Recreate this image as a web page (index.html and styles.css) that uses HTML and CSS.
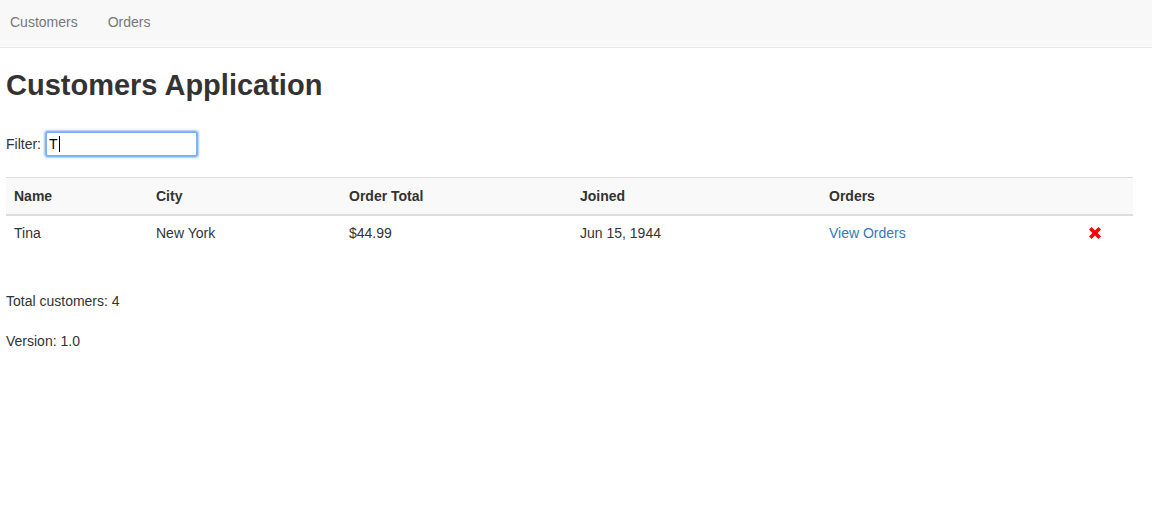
FILE: index.html
```html
<!DOCTYPE html>
<html>
<head>
<meta charset="utf-8">
<link rel="stylesheet" href="styles.css">
</head>
<body>
<nav class="navbar">
  <a class="nav-link" href="#">Customers</a>
  <a class="nav-link" href="#">Orders</a>
</nav>
<main class="container">
  <h1 class="title">Customers Application</h1>
  <div class="filter">
    <label class="filter-label">Filter:</label>
    <div class="filter-input">T<span class="caret"></span></div>
  </div>
  <table class="table">
    <colgroup>
      <col class="c1"><col class="c2"><col class="c3"><col class="c4"><col class="c5"><col class="c6">
    </colgroup>
    <thead>
      <tr><th>Name</th><th>City</th><th>Order Total</th><th>Joined</th><th>Orders</th><th></th></tr>
    </thead>
    <tbody>
      <tr>
        <td>Tina</td><td>New York</td><td>$44.99</td><td>Jun 15, 1944</td>
        <td><a class="link" href="#">View Orders</a></td>
        <td><svg class="remove" width="12" height="12" viewBox="0 0 12 12"><path d="M2.6 0 L6 3.4 L9.4 0 L12 2.6 L8.6 6 L12 9.4 L9.4 12 L6 8.6 L2.6 12 L0 9.4 L3.4 6 L0 2.6 Z" fill="#ff0000"/></svg></td>
      </tr>
    </tbody>
  </table>
  <p class="info total">Total customers: 4</p>
  <p class="info">Version: 1.0</p>
</main>
</body>
</html>
```
FILE: styles.css
```css
* { box-sizing: border-box; }
html, body { margin: 0; padding: 0; background: #fff; }
body {
  font-family: "Liberation Sans", Arial, sans-serif;
  font-size: 14px;
  line-height: 20px;
  color: #333;
}
.navbar {
  height: 48px;
  background: #f8f8f8;
  border-bottom: 1px solid #e7e7e7;
  display: flex;
  align-items: center;
  padding-left: 10px;
  padding-bottom: 3px;
  gap: 30px;
}
.nav-link {
  color: #777;
  text-decoration: none;
  font-size: 14px;
}
.container { padding: 0 6px; }
.title {
  margin: 19px 0 0 0;
  font-size: 29px;
  line-height: 36px;
  font-weight: bold;
  color: #333;
}
.filter {
  margin-top: 28px;
  display: flex;
  align-items: center;
  gap: 4px;
  height: 26px;
}
.filter-label { color: #333; }
.filter-input {
  width: 153px;
  height: 26px;
  border: 2px solid #7db3f5;
  border-radius: 3px;
  box-shadow: 0 0 2px 1px rgba(110, 165, 240, 0.6);
  padding: 1px 2px;
  font-size: 14px;
  line-height: 20px;
  color: #000;
  display: flex;
  align-items: center;
}
.caret {
  display: inline-block;
  width: 1px;
  height: 16px;
  background: #000;
  margin-left: 1px;
}
.table {
  margin-top: 20px;
  width: 1127px;
  border-collapse: collapse;
  table-layout: fixed;
}
.c1 { width: 142px; }
.c2 { width: 193px; }
.c3 { width: 231px; }
.c4 { width: 249px; }
.c5 { width: 260px; }
.c6 { width: 52px; }
.table thead tr { background: #f9f9f9; }
.table th {
  text-align: left;
  font-weight: bold;
  padding: 8px;
  height: 37px;
  border-top: 1px solid #ddd;
  border-bottom: 2px solid #ddd;
}
.table td {
  padding: 7px 8px 9px;
  height: 36px;
  vertical-align: top;
}
.link { color: #337ab7; text-decoration: none; }
.remove { display: block; margin-top: 4px; }
.info { margin: 0; }
.total { margin-top: 39px; }
.info + .info { margin-top: 20px; }
```
